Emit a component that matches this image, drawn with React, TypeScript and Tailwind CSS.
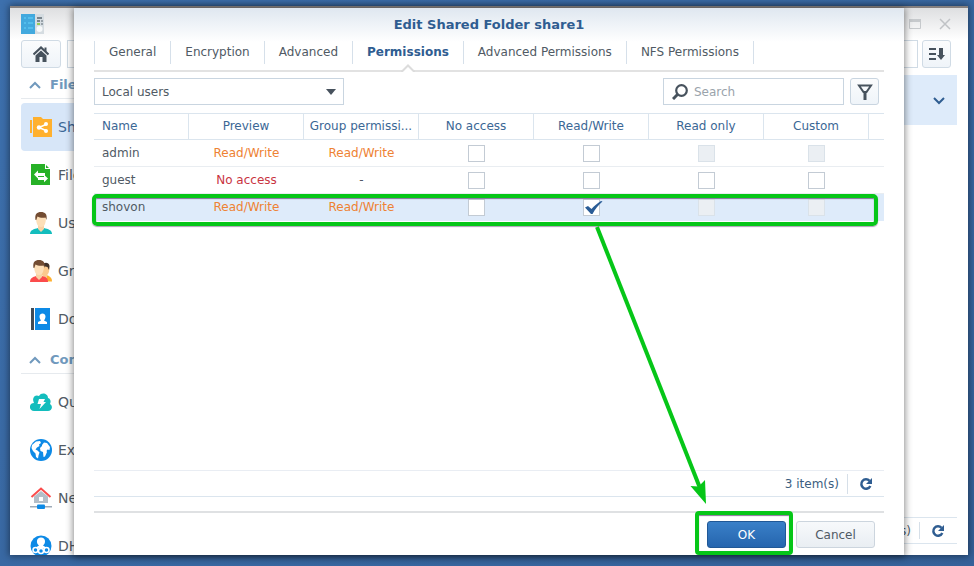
import type { ReactNode } from 'react';

type Access = 'Read/Write' | 'No access' | '-';

interface Box {
  label: string;
  checked?: boolean;
  disabled?: boolean;
}

interface UserRow {
  name: string;
  preview: Access;
  group: Access;
  boxes: Box[];
  selected?: boolean;
}

const users: UserRow[] = [
  {
    name: 'admin',
    preview: 'Read/Write',
    group: 'Read/Write',
    boxes: [
      { label: 'No access' },
      { label: 'Read/Write' },
      { label: 'Read only', disabled: true },
      { label: 'Custom', disabled: true },
    ],
  },
  {
    name: 'guest',
    preview: 'No access',
    group: '-',
    boxes: [{ label: 'No access' }, { label: 'Read/Write' }, { label: 'Read only' }, { label: 'Custom' }],
  },
  {
    name: 'shovon',
    preview: 'Read/Write',
    group: 'Read/Write',
    selected: true,
    boxes: [
      { label: 'No access' },
      { label: 'Read/Write', checked: true },
      { label: 'Read only', disabled: true },
      { label: 'Custom', disabled: true },
    ],
  },
];

const accessColor: Record<Access, string> = {
  'Read/Write': 'text-[#ee8233]',
  'No access': 'text-[#c9353f]',
  '-': 'text-[#505a64]',
};

const tabs = ['General', 'Encryption', 'Advanced', 'Permissions', 'Advanced Permissions', 'NFS Permissions'];

const columns = ['Preview', 'Group permissi...', 'No access', 'Read/Write', 'Read only', 'Custom'];

function SharedFolderIcon() {
  return (
    <svg width="22" height="22" viewBox="0 0 22 22">
      <path d="M0 4h2v13H0z" fill="#ffb02e" />
      <path d="M3 1h8l2 2h9v18H3z" fill="#ffb02e" />
      <path d="M17 8 9 11.500l8 3.500" stroke="#fff" strokeWidth="1.500" fill="none" />
      <circle cx="9" cy="11.500" r="2.200" fill="#fff" />
      <circle cx="16" cy="8" r="2" fill="#fff" />
      <circle cx="16" cy="15" r="2" fill="#fff" />
    </svg>
  );
}

function FileServicesIcon() {
  return (
    <svg width="22" height="22" viewBox="0 0 22 22">
      <path d="M1 0h14v5h5v16H1z" fill="#27b127" />
      <path d="M16 1l3 3h-3z" fill="#27b127" />
      <path d="M4 10.500 8 6.500V9h7v3H8v2.500z" fill="#fff" />
      <path d="M18 14.500 14 10.800V13H8v3h6v2.300z" fill="#fff" />
    </svg>
  );
}

function UserIcon() {
  return (
    <svg width="22" height="22" viewBox="0 0 22 22">
      <path d="M0 22c0-4 4-5 8-6h6c4 1 8 2 8 6z" fill="#13bdbd" />
      <path d="M8 13h6v4l-3 3-3-3z" fill="#f8d3a4" />
      <path d="M6 5c0-3 2-4 5-4s5 1 5 4c0 5-1 10-5 10S6 10 6 5z" fill="#fddfb8" />
      <path d="M5.500 8C4.500 2 7 0 11 0s6.500 2 5.500 8l-1-2.500c-2 .500-6 .500-8-1L6.300 8z" fill="#734c32" />
    </svg>
  );
}

function GroupIcon() {
  return (
    <svg width="22" height="22" viewBox="0 0 22 22">
      <path d="M14 21.500 15 15l3 .500c3 1.500 4 3 4 6z" fill="#ffb02e" />
      <path d="M12 4h7c1 5 0 10-2 11v3l-2 1-3-4z" fill="#fbc98d" />
      <path d="M12 5c2-3 7-3 7.500 1l-.500 4-1.500-3L13 6z" fill="#3e3029" />
      <path d="M0 22c0-4 3-5 6-6h6c4 1 6 2 6 6z" fill="#fb4c4c" />
      <path d="M6 13h6v4l-3 3-3-3z" fill="#f8d3a4" />
      <path d="M4 5c0-3 2-4 5-4s5 1 5 4c0 5-1 10-5 10S4 10 4 5z" fill="#fddfb8" />
      <path d="M3.500 8C2.500 2 5 0 9 0s6.500 2 5.500 8l-1-2.500c-2 .500-6 .500-8-1L4.300 8z" fill="#734c32" />
    </svg>
  );
}

function DirectoryIcon() {
  return (
    <svg width="22" height="22" viewBox="0 0 22 22">
      <path d="M1 0h3v22H1z" fill="#414b55" />
      <path d="M5 0h15v22H5z" fill="#0d8ae6" />
      <path d="M9.500 8.500c0-4 6-4 6 0 0 2-1 3-1.500 4l3 1.500v2H8v-2l3-1.500c-.500-1-1.500-2-1.500-4z" fill="#fff" />
    </svg>
  );
}

function QuickConnectIcon() {
  return (
    <svg width="22" height="22" viewBox="0 0 22 22">
      <path d="M4 20c-6-1-5-8 0-8-3-6 2-9 5-7 2-4 9-3 9 2 3 1 3 4 2 6 4 3 1 7-2 7z" fill="#13bdbd" />
      <path d="M9 8h6l-1.500 3H16l-6.500 7 1.500-5H7.500z" fill="#fff" />
    </svg>
  );
}

function GlobeIcon() {
  return (
    <svg width="22" height="22" viewBox="0 0 22 22">
      <circle cx="11" cy="11" r="11" fill="#0d8ae6" />
      <path d="M2 6 6 2.500l4-.500 1 2-2 1.500.500 1.500L7 8.500l-1.500 2 2 1 2 2-1 3-.500 3-2-1.500-.500-3.500L3 12 1.500 9z" fill="#fff" />
      <path d="M12 6 14 3.500l3 .500 3 4-.500 3-2-.500-1 1.500.500 1-2 4.500-1.500.500-.500-5-2.500-1-.500-3 2-2z" fill="#fff" />
    </svg>
  );
}

function NetworkIcon() {
  return (
    <svg width="22" height="22" viewBox="0 0 22 22">
      <path d="M4 9.500 11 4l7 5.500V16H4z" fill="#b3bec8" />
      <path d="M9 10h4v4H9z" fill="#fff" />
      <path d="M1.500 10 11 1.500l9.500 8.500" stroke="#fb4c4c" strokeWidth="2" fill="none" />
      <path d="M0 19h22v1.500H0z" fill="#9dabb8" />
      <rect x="7" y="17.500" width="8" height="4.500" rx="1" fill="#0d8ae6" />
    </svg>
  );
}

function DhcpIcon() {
  return (
    <svg width="22" height="22" viewBox="0 0 22 22">
      <circle cx="11" cy="11" r="10.500" fill="#0d8ae6" />
      <path d="M11 2.500c5 0 5 6 2 8l5 3H4l5-3c-3-2-3-8 2-8z" fill="#fff" />
      <circle cx="5.500" cy="15" r="2.500" stroke="#fff" strokeWidth="1.500" fill="#0d8ae6" />
      <circle cx="11" cy="16" r="2.500" stroke="#fff" strokeWidth="1.500" fill="#0d8ae6" />
      <circle cx="16.500" cy="15" r="2.500" stroke="#fff" strokeWidth="1.500" fill="#0d8ae6" />
    </svg>
  );
}

function RefreshIcon() {
  return (
    <svg width="14" height="14" viewBox="0 0 14 14">
      <path d="M10.500 3.800A4.700 4.700 0 1 0 11.300 9" stroke="#2f5d91" strokeWidth="2.500" fill="none" />
      <path d="M13 1v6H7z" fill="#2f5d91" />
    </svg>
  );
}

function Chevron({ className }: { className: string }) {
  return (
    <svg width="12" height="8" viewBox="0 0 12 8" className={className}>
      <path d="M1 1l5 5 5-5" stroke="currentColor" strokeWidth="2" fill="none" />
    </svg>
  );
}

const sections = [
  {
    title: 'File Sharing',
    items: [
      { label: 'Shared Folder', icon: <SharedFolderIcon />, active: true },
      { label: 'File Services', icon: <FileServicesIcon /> },
      { label: 'User', icon: <UserIcon /> },
      { label: 'Group', icon: <GroupIcon /> },
      { label: 'Domain/LDAP', icon: <DirectoryIcon /> },
    ],
  },
  {
    title: 'Connectivity',
    items: [
      { label: 'QuickConnect', icon: <QuickConnectIcon /> },
      { label: 'External Access', icon: <GlobeIcon /> },
      { label: 'Network', icon: <NetworkIcon /> },
      { label: 'DHCP Server', icon: <DhcpIcon /> },
    ],
  },
];

function NavItem({ label, icon, active }: { label: string; icon: ReactNode; active?: boolean }) {
  return (
    <a
      href="#"
      className={`flex h-12 items-center gap-[6px] rounded-sm pl-[9px] text-sm whitespace-nowrap ${
        active ? 'bg-[#d7e6f8] text-[#3b6795]' : 'text-[#505a64]'
      }`}
    >
      <span className="shrink-0">{icon}</span>
      {label}
    </a>
  );
}

function ControlPanel() {
  return (
    <div className="absolute top-[6px] right-[6px] bottom-[11px] left-[10px] flex flex-col overflow-hidden border-t-2 border-[#85807f] bg-white shadow-[0_0_7px_1px_rgba(0,0,0,0.45)]">
      <div className="flex h-8 shrink-0 items-start justify-between bg-gradient-to-b from-[#dedfe1] to-white pr-[17px] pl-[11px]">
        <svg width="24" height="20" viewBox="0 0 24 20" className="mt-[6px]">
          <path d="M0 0h14v20H0z" fill="#42a9de" />
          <path d="M14 0h9v20h-9z" fill="#d5dce1" />
          <path d="M3 4h2M7 4h5M3 9h2M7 9h5M3 14h2M7 14h5" stroke="#65d3fa" />
          <path d="M16 4h5M16 7h3" stroke="#5b6770" strokeWidth="1.500" />
          <path d="M16 10h3" stroke="#7fc728" strokeWidth="1.500" />
          <path d="M20 7h2M20 10h2" stroke="#5b6770" />
          <circle cx="18.500" cy="15" r="3" fill="#f7f9fa" />
        </svg>
        <div className="mt-[10px] flex items-center gap-[18px]">
          <button type="button" aria-label="Maximize">
            <svg width="12" height="11" viewBox="0 0 12 11" className="block">
              <path d="M.500.500h11v9H.500z" fill="none" stroke="#c6c9cc" />
              <path d="M0 0h12v3H0z" fill="#c6c9cc" />
            </svg>
          </button>
          <button type="button" aria-label="Close">
            <svg width="12" height="12" viewBox="0 0 12 12" className="block">
              <path d="M1 1l10 10M11 1 1 11" stroke="#c0c3c6" strokeWidth="1.500" />
            </svg>
          </button>
        </div>
      </div>
      <div className="flex shrink-0 gap-1 pr-[17px] pl-[11px]">
        <button
          type="button"
          aria-label="Home"
          className="mr-[2px] flex h-7 w-10 items-center justify-center rounded-[3px] border border-[#d0dbe5] bg-gradient-to-b from-[#fbfcfd] to-[#eff4f9]"
        >
          <svg width="16" height="16" viewBox="0 0 16 16">
            <path d="M.500 8.500 8 1.500l7.500 7" stroke="#47525d" strokeWidth="2.200" fill="none" />
            <path d="M11.500 1.500h2V6l-2-2z" fill="#47525d" />
            <path d="M2.500 9.500 8 4.500l5.500 5V16h-4v-5h-3v5h-4z" fill="#47525d" />
          </svg>
        </button>
        <input
          type="text"
          aria-label="Search settings"
          className="h-7 min-w-0 flex-1 border border-[#d0dbe5] bg-white px-2 text-xs"
        />
        <button
          type="button"
          aria-label="Sort"
          className="flex h-7 w-[29px] items-center justify-center rounded-[3px] border border-[#d0dbe5] bg-gradient-to-b from-[#fbfcfd] to-[#eff4f9]"
        >
          <svg width="16" height="14" viewBox="0 0 16 14">
            <path d="M0 2h7M0 7h7M0 12h7" stroke="#47525d" strokeWidth="2" />
            <path d="M10 1h4v7h2l-4 5-4-5h2z" fill="#47525d" />
          </svg>
        </button>
      </div>
      <div className="flex min-h-0 flex-1">
        <nav className="w-[200px] shrink-0 overflow-hidden pl-[11px]">
          {sections.map((section) => (
            <div key={section.title}>
              <h2 className="mb-1 flex h-[31px] items-center gap-[9px] border-b border-[#e6eaee] pt-1 pl-2 text-[13px] font-bold whitespace-nowrap text-[#7099bd]">
                <Chevron className="rotate-180" />
                {section.title}
              </h2>
              {section.items.map((item) => (
                <NavItem key={item.label} {...item} />
              ))}
            </div>
          ))}
        </nav>
        <main className="flex min-w-0 flex-1 flex-col justify-between pr-[11px] pb-[11px]">
          <div className="mt-[7px] flex h-[50px] items-center justify-end bg-[#deebfa] pt-[2px] pr-3">
            <Chevron className="text-[#2f5d91]" />
          </div>
          <div className="flex h-[27px] items-center justify-end border-t border-b border-[#dbe5ee] pr-3 text-xs text-[#505a64]">
            <span>1 item(s)</span>
            <span className="my-1 mr-[11px] ml-2 w-px self-stretch bg-[#d6dfe8]" />
            <button type="button" aria-label="Refresh list">
              <RefreshIcon />
            </button>
          </div>
        </main>
      </div>
    </div>
  );
}

function PermissionBox({ box, user }: { box: Box; user: string }) {
  return (
    <span className="relative mx-auto block size-[17px]">
      <input
        type="checkbox"
        aria-label={`${box.label} for ${user}`}
        defaultChecked={box.checked}
        disabled={box.disabled}
        className="peer block size-[17px] appearance-none border border-[#c3cbd4] bg-white disabled:border-[#dae2e9] disabled:bg-[#ebeff3]"
      />
      <svg
        width="18"
        height="14"
        viewBox="0 0 18 14"
        className="pointer-events-none absolute top-[2px] left-[2px] hidden peer-checked:block"
      >
        <path d="M0 6.500 3 5l3.500 3C9 5 12.500 2 16 0l1.500.500C13.500 4 10 8 7.500 13H6z" fill="#2a5c96" />
      </svg>
    </span>
  );
}

function PermissionTable() {
  const head = 'h-[27px] border-t border-b border-[#dbe5ee] pb-[2px] font-normal';
  return (
    <div className="relative">
      <table className="w-full table-fixed border-separate border-spacing-0 text-xs text-[#505a64]">
        <colgroup>
          <col />
          <col className="w-[115px]" />
          <col className="w-[115px]" />
          <col className="w-[115px]" />
          <col className="w-[115px]" />
          <col className="w-[115px]" />
          <col className="w-[105px]" />
          <col className="w-[15px]" />
        </colgroup>
        <thead className="text-[#3b6795]">
          <tr>
            <th className={`${head} border-r px-2 text-left`}>Name</th>
            {columns.map((title) => (
              <th key={title} className={`${head} border-r px-1 whitespace-nowrap`}>
                {title}
              </th>
            ))}
            <th className={head} aria-label="More columns" />
          </tr>
        </thead>
        <tbody>
          {users.map((user) => {
            const cell = user.selected
              ? 'h-[27px] border-b border-[#deebfa] bg-[#deebfa]'
              : 'h-[27px] border-b border-[#e9edf1]';
            return (
              <tr key={user.name}>
                <td className={`${cell} px-2`}>{user.name}</td>
                <td className={`${cell} text-center ${accessColor[user.preview]}`}>{user.preview}</td>
                <td className={`${cell} text-center ${accessColor[user.group]}`}>{user.group}</td>
                {user.boxes.map((box) => (
                  <td key={box.label} className={cell}>
                    <PermissionBox box={box} user={user.name} />
                  </td>
                ))}
                <td className={cell} />
              </tr>
            );
          })}
        </tbody>
      </table>
      {/* callout round the selected user */}
      <div className="pointer-events-none absolute right-[6px] -bottom-[5px] -left-[2px] h-8 rounded-[5px] border-4 border-[#06c618] shadow-[0_1px_1px_rgba(90,60,110,0.5),inset_0_1px_1px_rgba(90,60,110,0.7)]" />
    </div>
  );
}

function EditDialog() {
  return (
    <div
      role="dialog"
      aria-labelledby="dialog-title"
      className="absolute top-2 right-[70px] bottom-[11px] left-[74px] flex flex-col bg-white bg-gradient-to-b from-[#dfe7f0] to-white to-[34px] px-5 shadow-[0_1px_7px_1px_rgba(0,0,0,0.45)]"
    >
      <h1 id="dialog-title" className="flex h-[33px] items-center justify-center text-[13px] font-bold text-[#2f5d91]">
        Edit Shared Folder share1
      </h1>
      <div role="tablist" className="flex h-[31px] shrink-0 items-start border-b-2 border-[#e2e2e2] text-xs">
        {tabs.map((tab) => (
          <button
            key={tab}
            type="button"
            role="tab"
            aria-selected={tab === 'Permissions'}
            className={`relative h-[23px] border-r border-[#d6e0ea] px-[14px] pb-[2px] first:border-l ${
              tab === 'Permissions' ? 'font-bold text-[#2f5d91]' : 'text-[#505a64]'
            }`}
          >
            {tab}
            {tab === 'Permissions' && (
              <svg width="14" height="8" viewBox="0 0 14 8" className="absolute top-[23px] left-1/2 -translate-x-1/2">
                <path d="M1 8 7 1.500 13 8z" fill="#fff" />
                <path d="M0 7.500h1L7 1.500l6 6h1" stroke="#dcdcdc" strokeWidth="2" fill="none" />
              </svg>
            )}
          </button>
        ))}
      </div>
      <div className="mt-[6px] mb-2 flex shrink-0 items-center gap-[6px] text-xs">
        <div className="relative mr-auto w-[250px]">
          <select
            aria-label="User type"
            className="block h-[27px] w-full appearance-none border border-[#c9d5e0] bg-white px-[7px] text-[#505a64]"
          >
            <option>Local users</option>
          </select>
          <svg width="10" height="6" viewBox="0 0 10 6" className="pointer-events-none absolute top-[11px] right-2">
            <path d="M0 0h10L5 6z" fill="#47525d" />
          </svg>
        </div>
        <label className="flex h-[27px] w-[181px] items-center gap-[6px] border border-[#c9d5e0] bg-white px-2">
          <svg width="16" height="16" viewBox="0 0 16 16" className="shrink-0">
            <circle cx="9.500" cy="6.500" r="5.300" stroke="#47525d" strokeWidth="2.200" fill="none" />
            <path d="M5.500 10.500 1 15" stroke="#47525d" strokeWidth="3" />
          </svg>
          <input
            type="search"
            aria-label="Search"
            placeholder="Search"
            className="min-w-0 flex-1 outline-none placeholder:text-[#9aa3ab]"
          />
        </label>
        <button
          type="button"
          aria-label="Filter"
          className="mr-[5px] flex h-[27px] w-[29px] items-center justify-center rounded-[3px] border border-[#c9d5e0] bg-gradient-to-b from-[#fbfcfd] to-[#eff4f9]"
        >
          <svg width="16" height="16" viewBox="0 0 16 16">
            <path d="M2 1.500h12L9.500 8h-3z" stroke="#47525d" strokeWidth="2" fill="none" />
            <path d="M8 7v9" stroke="#47525d" strokeWidth="3" />
          </svg>
        </button>
      </div>
      <div className="min-h-0 flex-1">
        <PermissionTable />
      </div>
      <div className="flex h-[27px] shrink-0 items-center justify-end border-t border-b border-t-[#e9edf3] border-b-[#dbe5ee] pr-[11px] text-xs text-[#3b5d80]">
        <span>3 item(s)</span>
        <span className="mr-[11px] ml-2 h-5 w-px bg-[#d6dfe8]" />
        <button type="button" aria-label="Refresh">
          <RefreshIcon />
        </button>
      </div>
      <div className="mt-[14px] flex shrink-0 justify-end gap-[10px] border-t-2 border-[#dfe1e3] pt-2 pr-[9px] pb-[7px] text-xs">
        <div className="relative">
          <button
            type="button"
            className="block h-[27px] w-[79px] rounded-[3px] border border-[#205896] bg-gradient-to-b from-[#3a80c8] to-[#2565ae] text-white"
          >
            OK
          </button>
          <div className="pointer-events-none absolute -top-[10px] -right-[7px] -bottom-[7px] -left-3 rounded-[4px] border-4 border-[#06c618] shadow-[inset_0_1px_1px_rgba(90,60,110,0.7)]" />
        </div>
        <button
          type="button"
          className="h-[27px] w-[79px] rounded-[3px] border border-[#ccd5de] bg-gradient-to-b from-[#f7f9fb] to-[#e9eef3] text-[#505a64]"
        >
          Cancel
        </button>
      </div>
      {/* arrow from the ticked box down to OK */}
      <svg
        width="120"
        height="284"
        viewBox="0 0 120 284"
        className="pointer-events-none absolute right-[193px] bottom-[48px]"
      >
        <path d="M6 4 109 265" stroke="#06c618" strokeWidth="4" />
        <path d="M115 281 99.500 263l8 .500 6.500-6.500z" fill="#06c618" />
      </svg>
    </div>
  );
}

export default function App() {
  return (
    <div className="relative min-h-screen overflow-hidden bg-[#3a6ba7] bg-gradient-to-br from-[#3d70ad] to-[#356199] font-['DejaVu_Sans',sans-serif]">
      <ControlPanel />
      <EditDialog />
    </div>
  );
}
